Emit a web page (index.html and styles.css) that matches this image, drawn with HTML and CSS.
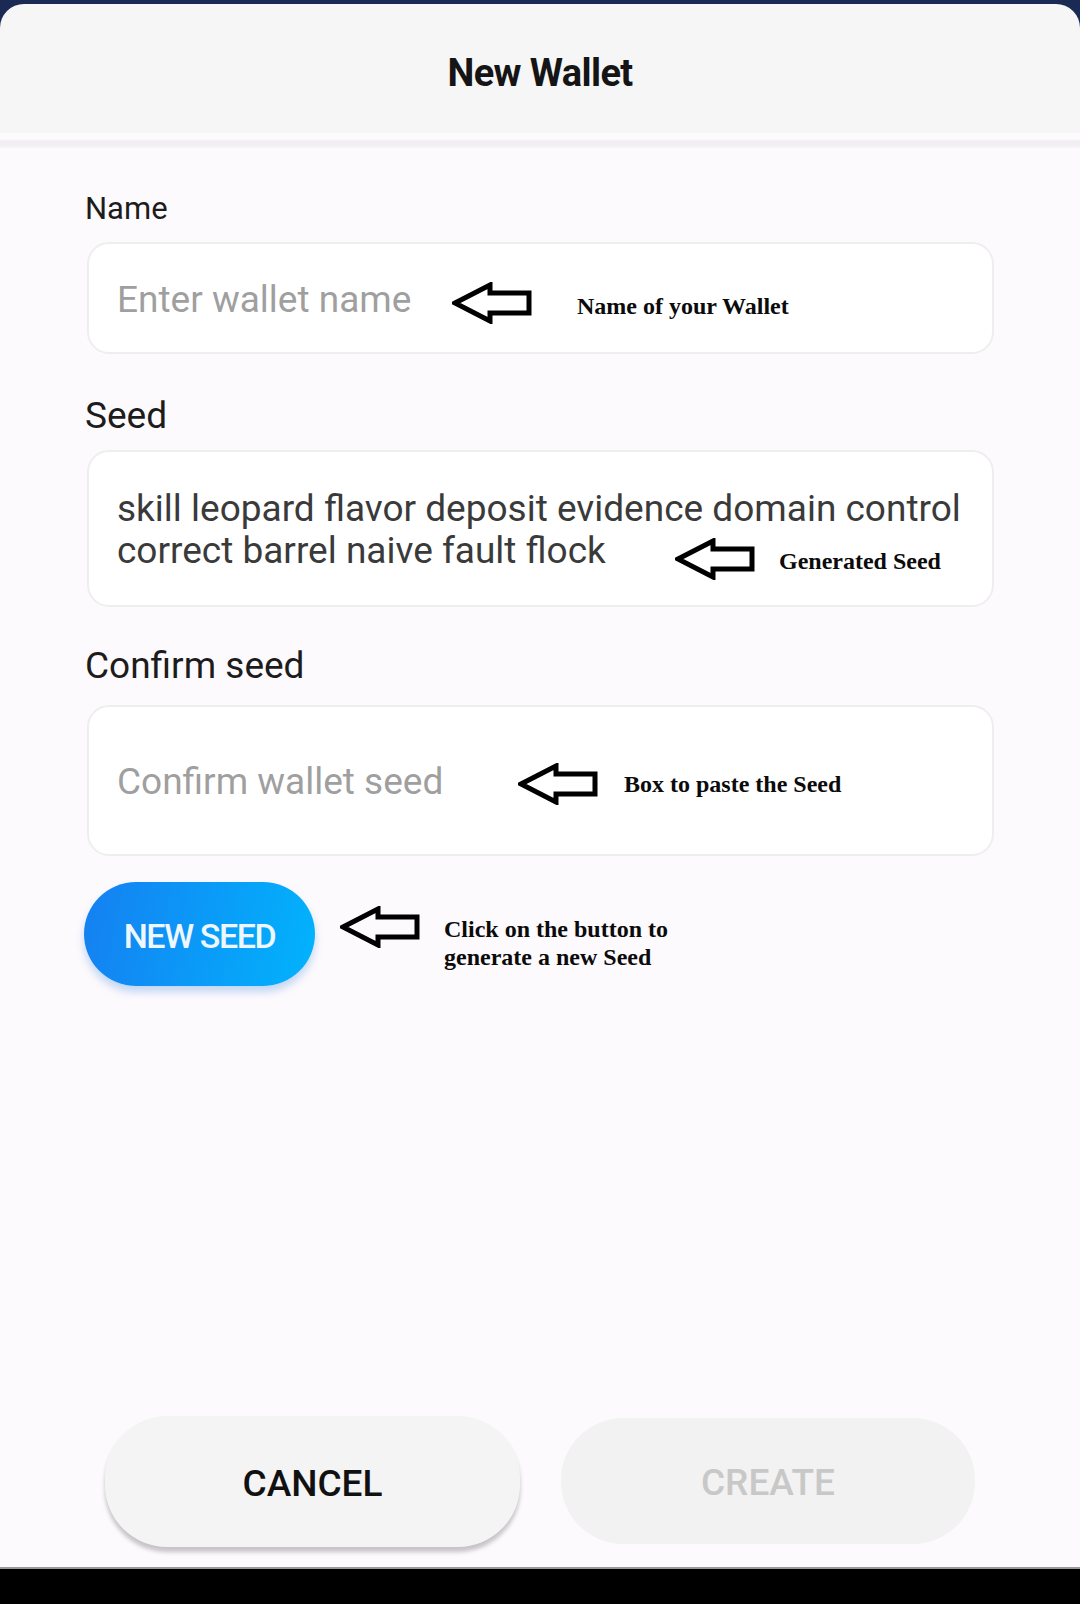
FILE: index.html
```html
<!DOCTYPE html>
<html lang="en">
<head>
<meta charset="utf-8">
<title>New Wallet</title>
<link rel="stylesheet" href="styles.css">
</head>
<body>
<div class="screen">
  <div class="top">
    <header class="header"><h1 class="title">New Wallet</h1></header>
  </div>
  <div class="header-sep"></div>

  <main class="form">
    <div class="label label-name">Name</div>
    <div class="box box-name">
      <span class="placeholder">Enter wallet name</span>
      <div class="note note-name">
        <svg class="arrow" viewBox="0 0 80 42" width="80" height="42"><polygon points="3,21 38,3 38,11 77,11 77,31 38,31 38,39" /></svg>
        <span class="note-text">Name of your Wallet</span>
      </div>
    </div>

    <div class="label label-seed">Seed</div>
    <div class="box box-seed">
      <div class="seed-text">skill leopard flavor deposit evidence domain control<br>correct barrel naive fault flock</div>
      <div class="note note-seed">
        <svg class="arrow" viewBox="0 0 80 42" width="80" height="42"><polygon points="3,21 38,3 38,11 77,11 77,31 38,31 38,39" /></svg>
        <span class="note-text note-condensed">Generated Seed</span>
      </div>
    </div>

    <div class="label label-confirm">Confirm seed</div>
    <div class="box box-confirm">
      <span class="placeholder">Confirm wallet seed</span>
      <div class="note note-confirm">
        <svg class="arrow" viewBox="0 0 80 42" width="80" height="42"><polygon points="3,21 38,3 38,11 77,11 77,31 38,31 38,39" /></svg>
        <span class="note-text">Box to paste the Seed</span>
      </div>
    </div>

    <div class="seed-row">
      <button class="btn-new">NEW SEED</button>
      <svg class="arrow arrow-btn" viewBox="0 0 80 42" width="80" height="42"><polygon points="3,21 38,3 38,11 77,11 77,31 38,31 38,39" /></svg>
      <span class="note-text note-multi">Click on the button to<br>generate a new Seed</span>
    </div>
  </main>

  <footer class="actions">
    <button class="btn btn-cancel">CANCEL</button>
    <button class="btn btn-create">CREATE</button>
  </footer>
  <div class="navbar"></div>
</div>
</body>
</html>
```

FILE: styles.css
```css
* { box-sizing: border-box; }

body {
  margin: 0;
  background: #fdfafd;
  font-family: Roboto, "Noto Sans", sans-serif;
}

.screen {
  width: 1080px;
  height: 1604px;
  display: flex;
  flex-direction: column;
  background: #fdfafd;
  overflow: hidden;
}

.top {
  background: #1b2a55;
  padding-top: 4px;
}

.header {
  height: 129px;
  background: #f6f6f6;
  border-radius: 24px 24px 0 0;
  padding-top: 48px;
  text-align: center;
}

.title {
  margin: 0;
  font-size: 38px;
  line-height: 42px;
  font-weight: 700;
  letter-spacing: -0.6px;
  color: #151515;
}

.header-sep {
  height: 16px;
  background: linear-gradient(to bottom, #fdfbfe 0, #fdfbfe 6px, #f1eef2 8px, #f3f0f4 13px, #fdfafd 16px);
}

.form {
  flex: 1;
  display: flex;
  flex-direction: column;
  align-items: flex-start;
  padding-left: 85px;
}

.label {
  color: #1c1c1c;
  font-weight: 400;
}

.label-name {
  margin-top: 42px;
  font-size: 31px;
  line-height: 36px;
}

.label-seed {
  margin-top: 41px;
  font-size: 37px;
  line-height: 42px;
}

.label-confirm {
  margin-top: 38px;
  font-size: 37px;
  line-height: 42px;
}

.box {
  position: relative;
  margin-left: 2px;
  width: 907px;
  background: #ffffff;
  border: 2px solid #efeeef;
  border-radius: 22px;
  display: flex;
  align-items: center;
  padding-left: 28px;
}

.box-name {
  margin-top: 15px;
  height: 112px;
}

.box-seed {
  margin-top: 13px;
  height: 157px;
  align-items: flex-start;
  padding-top: 36px;
}

.box-confirm {
  margin-top: 18px;
  height: 151px;
}

.placeholder {
  font-size: 37px;
  color: #9f9f9f;
  padding-top: 2px;
}

.seed-text {
  font-size: 37px;
  line-height: 42px;
  color: #3a3a3a;
  white-space: nowrap;
}

.note {
  position: absolute;
  display: flex;
  align-items: center;
}

.note-name { left: 363px; top: 38px; }
.note-seed { left: 586px; top: 86px; }
.note-confirm { left: 429px; top: 56px; }

.arrow polygon {
  fill: none;
  stroke: #000;
  stroke-width: 5;
  stroke-linejoin: miter;
}

.note-text {
  font-family: "Liberation Serif", "Times New Roman", serif;
  font-weight: 700;
  font-size: 24px;
  color: #0b0b0b;
  white-space: nowrap;
}

.note-name .note-text { margin-left: 45px; padding-top: 6px; }
.note-seed .note-text { margin-left: 24px; padding-top: 4px; }
.note-confirm .note-text { margin-left: 26px; padding-top: 0; }

.seed-row {
  margin-top: 26px;
  display: flex;
  align-items: center;
}

.btn-new {
  margin-left: -1px;
  width: 231px;
  height: 104px;
  border: none;
  border-radius: 52px;
  background: linear-gradient(100deg, #1580f1 0%, #0a9cf8 55%, #02b3fc 100%);
  box-shadow: 0 6px 8px rgba(40, 120, 220, 0.28);
  color: #eef7ff;
  font-family: Roboto, "Noto Sans", sans-serif;
  font-weight: 500;
  font-size: 34px;
  letter-spacing: -1.4px;
  padding: 4px 0 0;
}

.arrow-btn {
  margin-left: 25px;
  margin-top: -14px;
}

.note-multi {
  margin-left: 24px;
  margin-top: 18px;
  line-height: 28px;
}

.actions {
  display: flex;
  align-items: flex-start;
  gap: 41px;
  padding: 0 0 20px 105px;
}

.btn {
  width: 415px;
  border: none;
  border-radius: 62px;
  font-family: Roboto, "Noto Sans", sans-serif;
  font-weight: 500;
  font-size: 37px;
  letter-spacing: 0;
  padding-top: 4px;
}

.btn-cancel {
  height: 131px;
  background: #f5f4f5;
  color: #111;
  box-shadow: 0 5px 4px rgba(0, 0, 0, 0.22);
}

.btn-create {
  margin-top: 2px;
  height: 126px;
  width: 414px;
  background: #f3f2f3;
  color: #c8c8c8;
}

.navbar {
  height: 37px;
  background: #000;
  border-top: 2px solid #9a9a9a;
}
```
